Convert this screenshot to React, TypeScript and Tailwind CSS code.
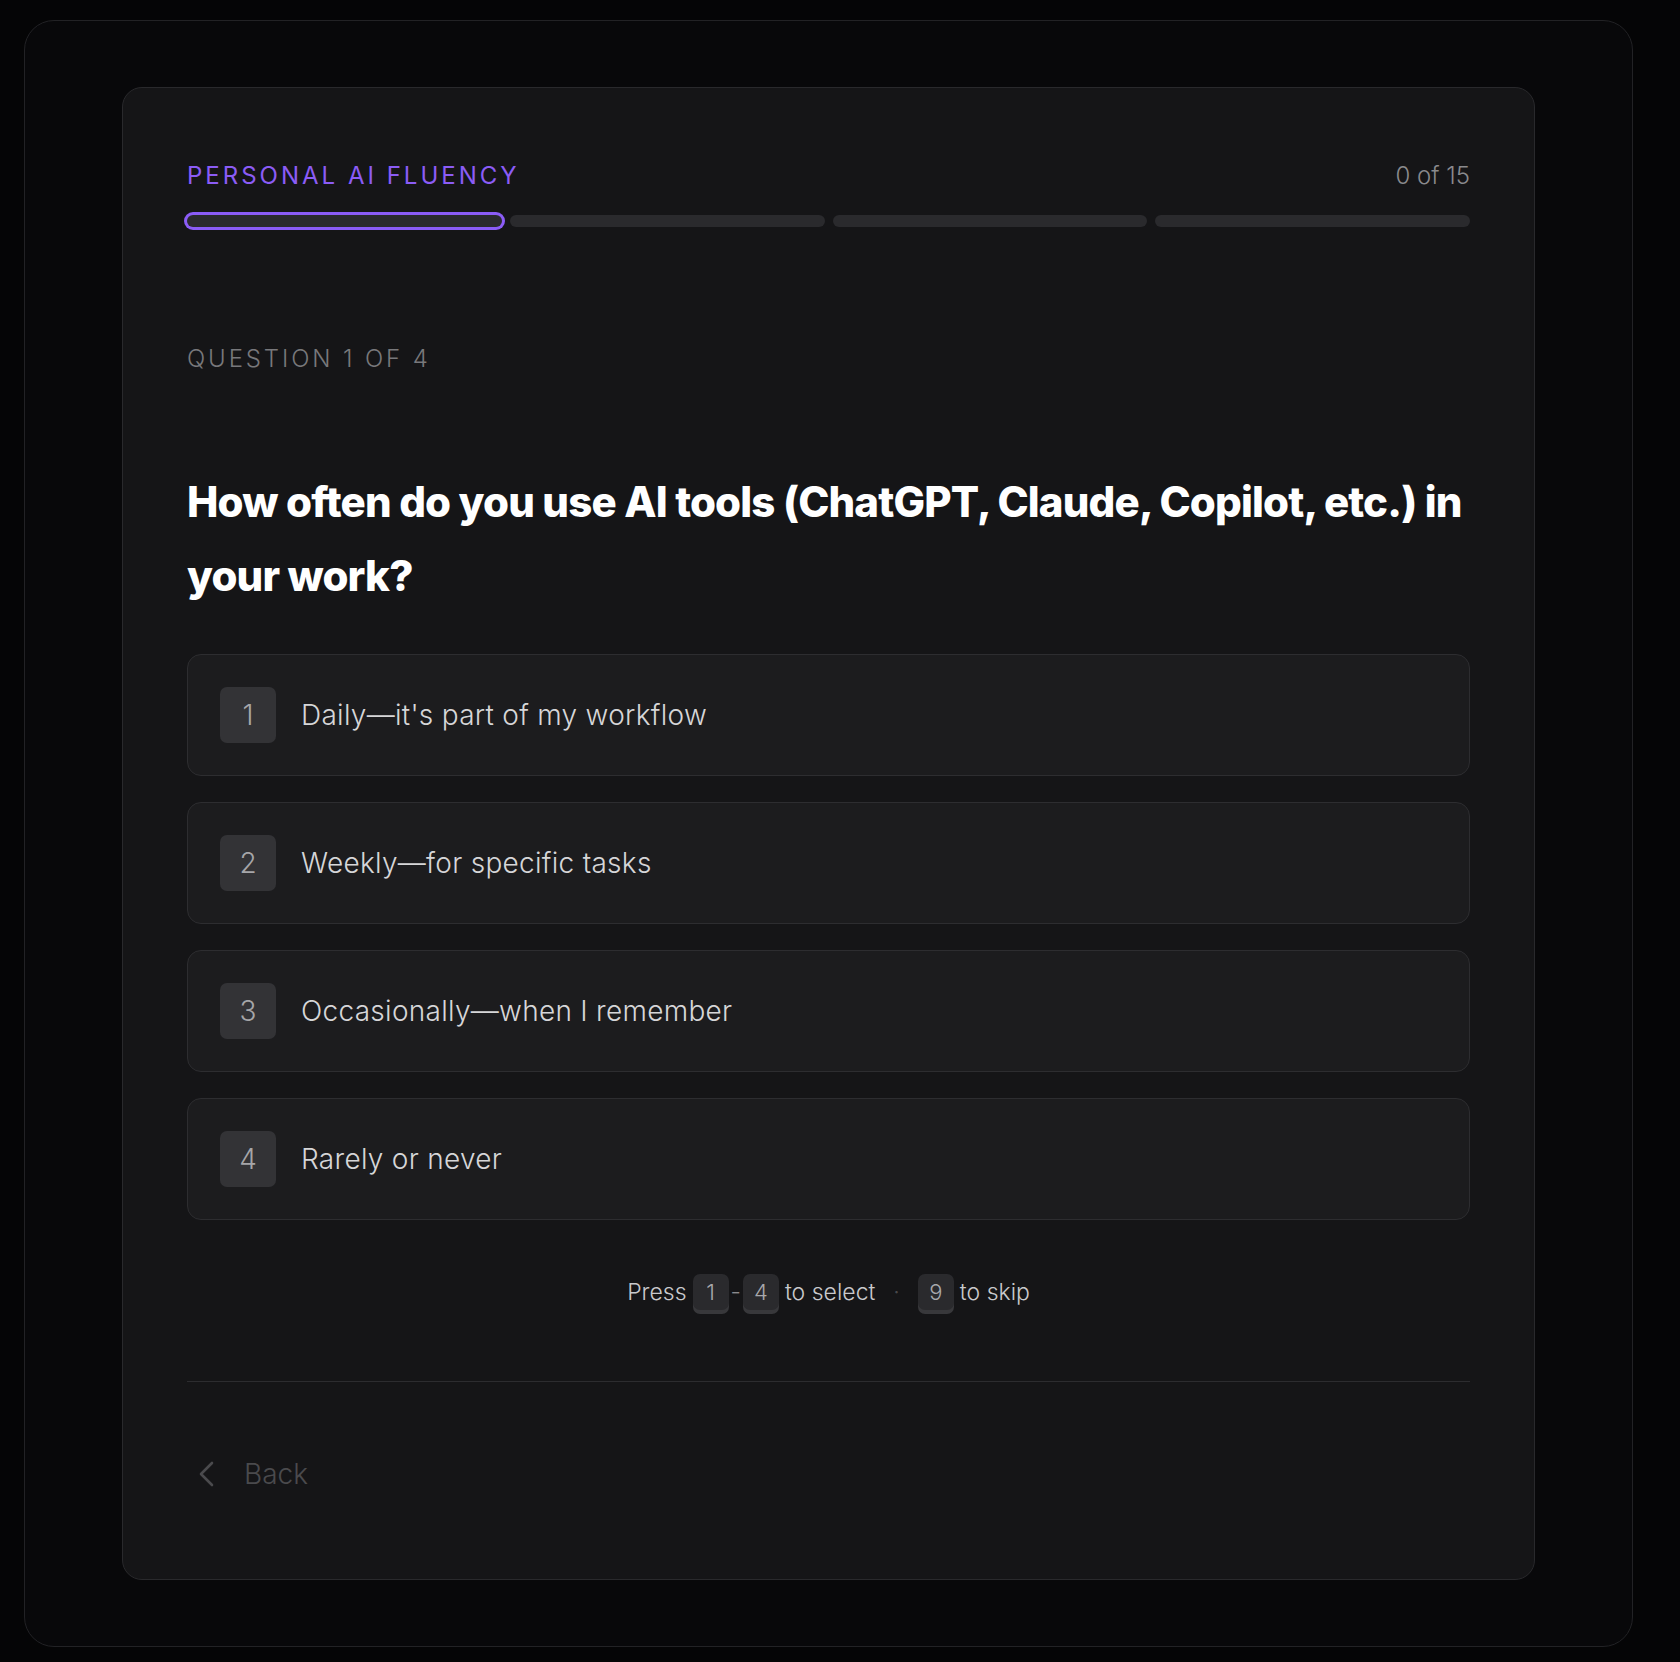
import React from 'react';

const options = [
  'Daily—it\'s part of my workflow',
  'Weekly—for specific tasks',
  'Occasionally—when I remember',
  'Rarely or never',
];

function Key({ children }: { children: React.ReactNode }) {
  return (
    <span className="inline-flex h-[36px] min-w-[36px] items-center justify-center rounded-[7px] bg-[#2a2a2d] px-2 text-[22px] text-[#a8a8ab] shadow-[0_4px_0_#38383b]">
      {children}
    </span>
  );
}

export default function App() {
  return (
    <div className="min-h-[1662px] bg-[#050506] pl-[24px] pt-[20px] font-['Inter',sans-serif]">
      <div className="w-[1609px] rounded-[30px] border border-[#222225] bg-[#08080a] px-[97px] py-[66px]">
        <div className="rounded-[20px] border border-[#29292c] bg-[#151517] px-16 pb-[75px] pt-16">
          {/* header */}
          <div className="flex h-12 items-center justify-between">
            <span className="text-[24px] font-normal uppercase tracking-[0.125em] text-[#8b5cf6]">
              Personal AI Fluency
            </span>
            <span className="text-[24px] font-light text-[#8a8a8d]">0 of 15</span>
          </div>

          <div className="mt-[15px] grid grid-cols-4 gap-2">
            <div className="h-3 rounded-full bg-[#2a2a2d] ring-[3px] ring-[#8b5cf6]" />
            <div className="h-3 rounded-full bg-[#2a2a2d]" />
            <div className="h-3 rounded-full bg-[#2a2a2d]" />
            <div className="h-3 rounded-full bg-[#2a2a2d]" />
          </div>

          <p className="mt-[116px] text-[24px] font-light uppercase leading-8 tracking-[0.12em] text-[#78787b]">
            Question 1 of 4
          </p>

          <h1 className="mt-[90px] text-[42px] font-extrabold leading-[74px] tracking-[-0.02em] text-white">
            How often do you use AI tools (ChatGPT, Claude, Copilot, etc.) in your work?
          </h1>

          <div className="mt-[41px] flex flex-col gap-[26px]">
            {options.map((o, i) => (
              <div
                key={o}
                className="flex h-[122px] items-center gap-[25px] rounded-[14px] border border-[#2d2d30] bg-[#1c1c1e] px-8"
              >
                <span className="flex h-14 w-14 items-center justify-center rounded-[7px] bg-[#333336] text-[28px] font-light text-[#a6a6a9]">
                  {i + 1}
                </span>
                <span className="text-[28px] font-light tracking-[0.01em] text-[#d6d6d8]">{o}</span>
              </div>
            ))}
          </div>

          <div className="mt-[52px] flex h-10 items-center justify-center gap-1.5 text-[23px] font-light text-[#c9c9cc]">
            <span>Press</span>
            <Key>1</Key>
            <span className="-mx-1 text-[#8a8a8d]">-</span>
            <Key>4</Key>
            <span>to select</span>
            <span className="mx-3 text-[#4a4a4d]">·</span>
            <Key>9</Key>
            <span>to skip</span>
          </div>

          <div className="mt-[69px] h-px bg-[#2c2c2f]" />

          <button className="mt-[62px] flex items-center gap-[30px] py-3 pl-[11px] text-[28px] font-light leading-9 text-[#4a4a4d]">
            <svg width="16" height="26" viewBox="0 0 16 26" fill="none">
              <path d="M14 2 L3 13 L14 24" stroke="#4a4a4d" strokeWidth="2.6" strokeLinecap="round" strokeLinejoin="round" />
            </svg>
            <span>Back</span>
          </button>
        </div>
      </div>
    </div>
  );
}
